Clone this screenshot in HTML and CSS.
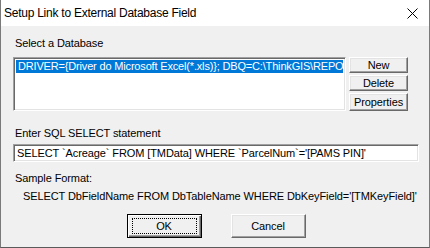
FILE: index.html
```html
<!DOCTYPE html>
<html>
<head>
<meta charset="utf-8">
<link rel="stylesheet" href="styles.css">
</head>
<body>
<div class="window">
  <div class="titlebar">
    <span class="title">Setup Link to External Database Field</span>
    <span class="close">
      <svg width="11" height="11" viewBox="0 0 11 11"><path d="M0.5 0.5 L10.5 10.5 M10.5 0.5 L0.5 10.5" stroke="#000" stroke-width="1" fill="none"/></svg>
    </span>
  </div>
  <div class="client">
    <div class="label lbl-db">Select a Database</div>
    <div class="db-row">
      <div class="listbox">
        <div class="item selected">DRIVER={Driver do Microsoft Excel(*.xls)}; DBQ=C:\ThinkGIS\REPO</div>
      </div>
      <div class="side-buttons">
        <div class="btn small">New</div>
        <div class="btn small">Delete</div>
        <div class="btn small">Properties</div>
      </div>
    </div>
    <div class="label lbl-sql">Enter SQL SELECT statement</div>
    <div class="textbox">SELECT `Acreage` FROM [TMData] WHERE `ParcelNum`='[PAMS PIN]'</div>
    <div class="label lbl-sample">Sample Format:</div>
    <div class="label sample">SELECT DbFieldName FROM DbTableName WHERE DbKeyField='[TMKeyField]'</div>
    <div class="footer">
      <div class="btn big default"><span class="focus">OK</span></div>
      <div class="btn big">Cancel</div>
    </div>
  </div>
</div>
</body>
</html>
```

FILE: styles.css
```css
html, body {
  margin: 0;
  padding: 0;
  background: #6d6d6d;
}
.window {
  width: 430px;
  height: 248px;
  box-sizing: border-box;
  border-left: 1px solid #7a7a7a;
  border-right: 1px solid #7a7a7a;
  border-bottom: 1px solid #5a5a5a;
  background: #f0f0f0;
  display: flex;
  flex-direction: column;
  font-family: "Liberation Sans", Arial, sans-serif;
  font-size: 11px;
  letter-spacing: -0.1px;
  color: #000;
  overflow: hidden;
}
.titlebar {
  height: 26px;
  flex: none;
  background: #fff;
  display: flex;
  align-items: center;
  justify-content: space-between;
  padding-left: 3px;
  padding-right: 11px;
}
.title {
  font-size: 12px;
  letter-spacing: -0.25px;
  line-height: 14px;
}
.close {
  display: flex;
  width: 11px;
  height: 11px;
}
.client {
  flex: 1;
  padding: 0 10px 0 12px;
  display: flex;
  flex-direction: column;
}
.label {
  line-height: 13px;
  white-space: nowrap;
}
.lbl-db {
  margin-top: 11px;
  padding-left: 2px;
}
.db-row {
  margin-top: 7px;
  display: flex;
  gap: 3px;
}
.listbox {
  width: 333px;
  height: 54px;
  box-sizing: border-box;
  background: #fff;
  border-top: 1px solid #a0a0a0;
  border-left: 1px solid #a0a0a0;
  border-right: 1px solid #fff;
  border-bottom: 1px solid #fff;
  box-shadow: inset 1px 1px 0 #696969, inset -1px -1px 0 #e3e3e3;
  padding: 2px 2px;
  overflow: hidden;
}
.item {
  height: 13px;
  line-height: 13px;
  white-space: nowrap;
  overflow: hidden;
  padding-left: 2px;
  letter-spacing: -0.17px;
}
.item.selected {
  background: #0078d7;
  color: #fff;
}
.side-buttons {
  display: flex;
  flex-direction: column;
  gap: 2px;
}
.btn {
  box-sizing: border-box;
  background: #f0f0f0;
  border-top: 1px solid #fff;
  border-left: 1px solid #fff;
  border-right: 1px solid #696969;
  border-bottom: 1px solid #696969;
  box-shadow: inset -1px -1px 0 #a0a0a0, inset 1px 1px 0 #e3e3e3;
  display: flex;
  align-items: center;
  justify-content: center;
  white-space: nowrap;
}
.btn.small {
  width: 59px;
  height: 16px;
}
.btn.small:last-child {
  height: 18px;
}
.lbl-sql {
  margin-top: 16px;
  padding-left: 2px;
}
.textbox {
  margin-top: 4px;
  width: 406px;
  height: 18px;
  box-sizing: border-box;
  background: #fff;
  border-top: 1px solid #a0a0a0;
  border-left: 1px solid #a0a0a0;
  border-right: 1px solid #fff;
  border-bottom: 1px solid #fff;
  box-shadow: inset 1px 1px 0 #696969, inset -1px -1px 0 #e3e3e3;
  padding: 2px 3px;
  line-height: 13px;
  white-space: nowrap;
  overflow: hidden;
}
.lbl-sample {
  margin-top: 10px;
  padding-left: 2px;
}
.sample {
  margin-top: 5px;
  padding-left: 10px;
}
.footer {
  margin-top: 11px;
  display: flex;
  justify-content: center;
  gap: 29px;
  padding-left: 0;
}
.btn.big {
  width: 75px;
  height: 24px;
}
.btn.default {
  border: 1px solid #000;
  box-shadow: inset 1px 1px 0 #fff, inset -1px -1px 0 #696969, inset -2px -2px 0 #a0a0a0;
}
.focus {
  box-sizing: border-box;
  width: 65px;
  height: 16px;
  border: 1px dotted #000;
  display: flex;
  align-items: center;
  justify-content: center;
}
```
